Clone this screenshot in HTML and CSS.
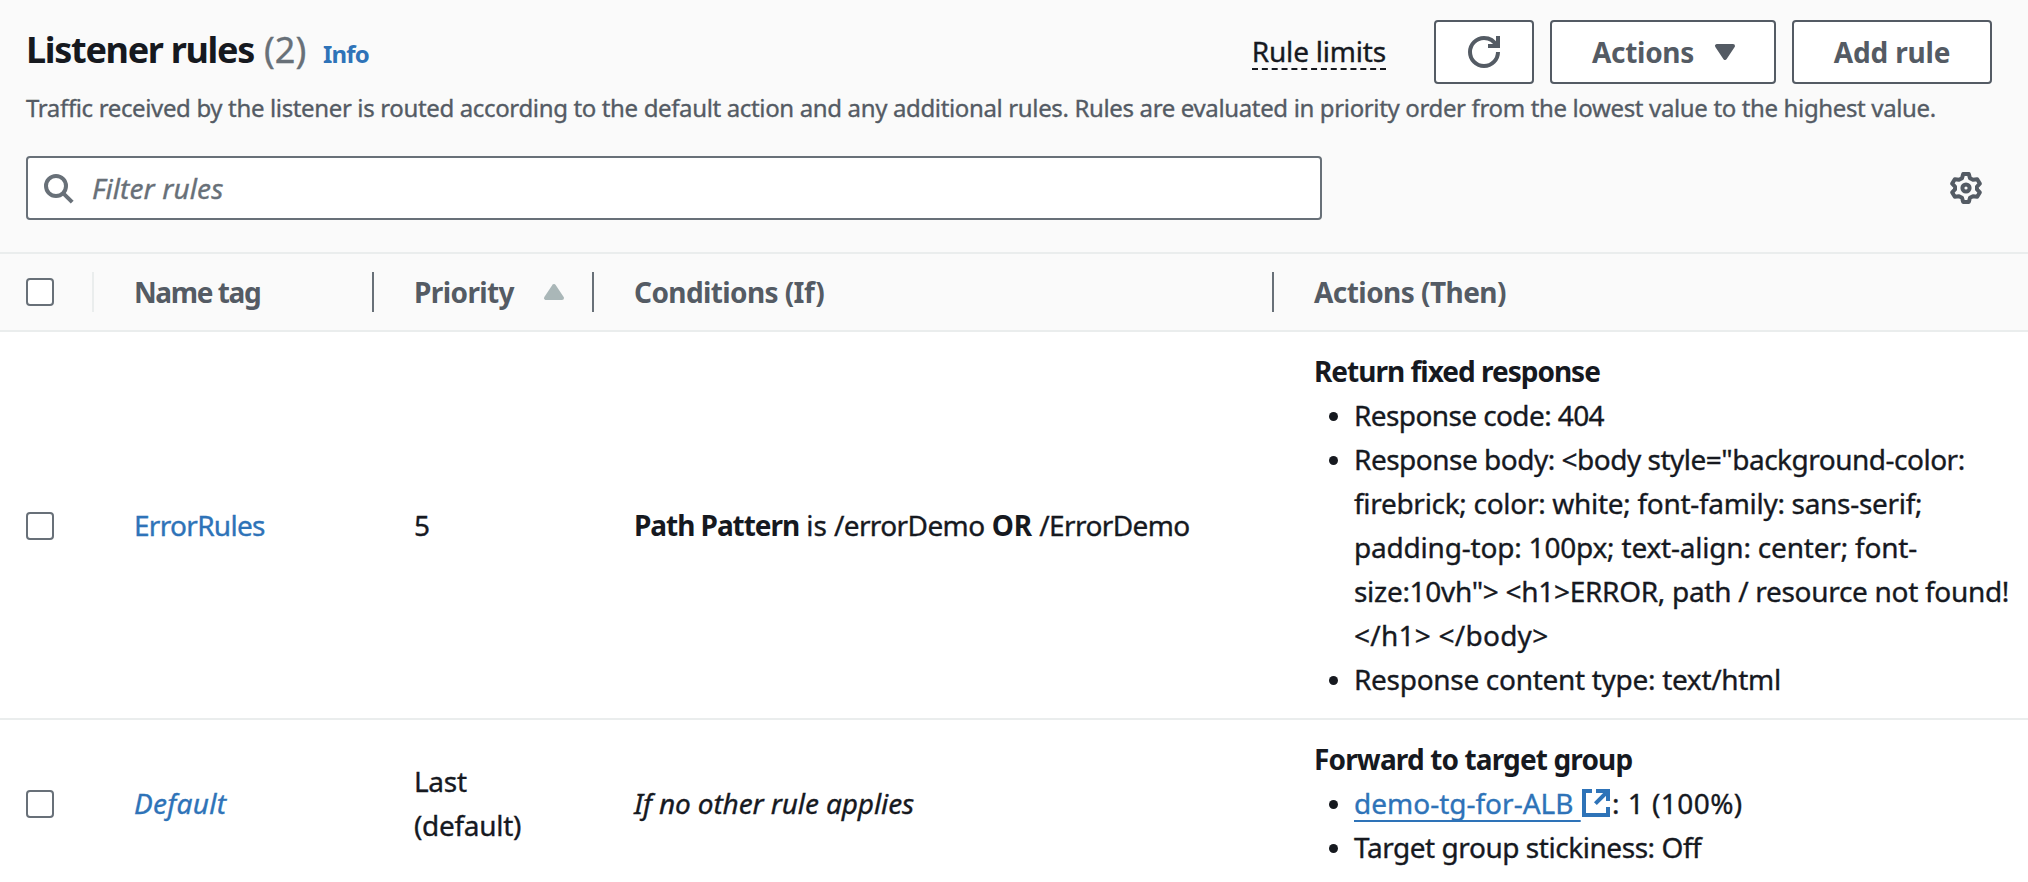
FILE: index.html
```html
<!DOCTYPE html>
<html lang="en">
<head>
<meta charset="utf-8">
<title>Listener rules</title>
<link rel="stylesheet" href="styles.css">
</head>
<body>
<header class="panel-header">
  <div class="title-row">
    <h2 class="title"><span class="title-text">Listener rules</span><span class="count">(2)</span><a class="info">Info</a></h2>
    <div class="toolbar">
      <span class="limits">Rule limits</span>
      <button class="btn btn-refresh" aria-label="Refresh">
        <svg class="icon" viewBox="0 0 16 16"><path d="M15 8c0 3.87-3.13 7-7 7s-7-3.13-7-7 3.13-7 7-7c2.79 0 5.2 1.63 6.33 4"/><path d="M10 5h5V0"/></svg>
      </button>
      <button class="btn btn-actions"><span class="actions-label">Actions</span>
        <svg class="icon caret" viewBox="0 0 16 16"><path d="M4 5h8l-4 6z"/></svg>
      </button>
      <button class="btn btn-add">Add rule</button>
    </div>
  </div>
  <p class="description">Traffic received by the listener is routed according to the default action and any additional rules. Rules are evaluated in priority order from the lowest value to the highest value.</p>
  <div class="filter-row">
    <div class="filter">
      <svg class="icon" viewBox="0 0 16 16"><circle cx="7" cy="7" r="5"/><path d="M10.4 10.4l4.7 4.7"/></svg>
      <span class="placeholder">Filter rules</span>
    </div>
    <svg class="icon gear" viewBox="0 0 16 16"><path d="M6.6 1h2.8L10 3.1l1.5.8 2.1-.3L14.900 5.800l-1.400 1.500v1.400l1.400 1.500-1.300 2.200-2.100-.3-1.500.8-.6 2.100H6.600L6 12.900l-1.500-.8-2.100.3L1.100 10.200l1.400-1.500V7.300L1.100 5.800l1.300-2.200 2.100.3L6 3.100z"/><circle cx="8" cy="8" r="1.800"/></svg>
  </div>
</header>

<main class="table">
  <div class="row head">
    <div class="cell select"><span class="checkbox"></span></div>
    <div class="cell"><span class="h-name">Name tag</span></div>
    <div class="cell"><span class="h-priority">Priority</span><svg class="icon sort" viewBox="0 0 16 16"><path d="M4 11h8L8 5z"/></svg></div>
    <div class="cell"><span class="h-cond">Conditions (If)</span></div>
    <div class="cell"><span class="h-act">Actions (Then)</span></div>
  </div>
  <div class="row">
    <div class="cell select"><span class="checkbox"></span></div>
    <div class="cell"><a class="link name-link">ErrorRules</a></div>
    <div class="cell">5</div>
    <div class="cell"><div class="condition"><b class="path">Path Pattern</b> is <span class="tight">/errorDemo</span> <b>OR</b> <span class="tight">/ErrorDemo</span></div></div>
    <div class="cell">
      <div class="rule">
        <b class="rule-title">Return fixed response</b>
        <ul>
          <li><div class="s55">Response code: 404</div></li>
          <li><div><span class="s50">Response body: &lt;body style="background-color:</span><br><span class="s30">firebrick; color: white; font-family: sans-serif;</span><br><span class="s20">padding-top: 100px; text-align: center; font-</span><br><span class="s30">size:10vh"&gt; &lt;h1&gt;ERROR, path / resource not found!</span><br><span class="s-wide">&lt;/h1&gt; &lt;/body&gt;</span></div></li>
          <li><div class="s30">Response content type: text/html</div></li>
        </ul>
      </div>
    </div>
  </div>
  <div class="row last">
    <div class="cell select"><span class="checkbox"></span></div>
    <div class="cell"><a class="link default-link"><i>Default</i></a></div>
    <div class="cell"><div class="s30">Last<br>(default)</div></div>
    <div class="cell"><i class="fallback">If no other rule applies</i></div>
    <div class="cell">
      <div class="rule">
        <b class="forward-title">Forward to target group</b>
        <ul>
          <li><div class="target"><a class="link underlined">demo-tg-for-ALB </a><svg class="icon external" viewBox="0 0 16 16"><path d="M6 2H2v12h12v-4M8 2h6v5M14 2L7.700 8.300"/></svg><span class="weight">: 1 (100%)</span></div></li>
          <li><div class="s45">Target group stickiness: Off</div></li>
        </ul>
      </div>
    </div>
  </div>
</main>
</body>
</html>
```
FILE: styles.css
```css
* { box-sizing: border-box; }
body {
  margin: 0;
  background: #fff;
  color: #16191f;
  font: 28px/44px "Noto Sans", "Open Sans", sans-serif;
  -webkit-text-stroke: .35px currentColor;
  white-space: nowrap;
  overflow: hidden;
}
b, .title-text, .info, .btn, .head { -webkit-text-stroke: 0; }
.icon {
  width: 32px;
  height: 32px;
  flex: none;
  display: block;
  fill: none;
  stroke: currentColor;
  stroke-width: 2;
}
.panel-header {
  height: 252px;
  padding: 20px 36px 0 26px;
  background: #fafafa;
}
.title-row { display: flex; justify-content: space-between; height: 64px; }
.title {
  display: flex;
  align-items: baseline;
  height: 44px;
  margin: 8px 0 0;
  font-size: 36px;
}
.title-text { width: 238px; letter-spacing: -1.3px; }
.count { width: 59px; color: #687078; font-weight: 400; }
.info { color: #2e73b8; font-size: 24px; letter-spacing: -.8px; }
.toolbar { display: flex; align-items: center; }
.limits {
  height: 38px;
  margin: 0 48px 2px 0;
  line-height: 38px;
  letter-spacing: -.2px;
  border-bottom: 2px dashed #16191f;
}
.btn {
  display: flex;
  align-items: center;
  justify-content: center;
  height: 64px;
  padding: 0;
  border: 2px solid #545b64;
  border-radius: 4px;
  background: #fff;
  color: #545b64;
  font: 700 28px/44px "Noto Sans", "Open Sans", sans-serif;
}
.btn-refresh { width: 100px; }
.btn-actions { width: 226px; margin: 0 16px; padding-left: 7px; gap: 15px; }
.btn-add { width: 200px; letter-spacing: -.15px; }
.actions-label { letter-spacing: -.3px; }
.caret, .sort { fill: currentColor; stroke-linejoin: round; }
.description {
  margin: 8px 0 0;
  color: #545b64;
  font-size: 24px;
  line-height: 32px;
  letter-spacing: -.355px;
}
.filter-row {
  display: flex;
  align-items: center;
  justify-content: space-between;
  margin-top: 32px;
  padding-right: 10px;
}
.filter {
  display: flex;
  align-items: center;
  gap: 18px;
  width: 1296px;
  height: 64px;
  padding-left: 14px;
  border: 2px solid #687078;
  border-radius: 4px;
  background: #fff;
  color: #687078;
}
.placeholder { font-style: italic; letter-spacing: .1px; }
.gear { color: #545b64; stroke-linejoin: round; }

.row {
  display: grid;
  grid-template-columns: 94px 280px 220px 680px 754px;
  border-bottom: 2px solid #eaeded;
}
.row.last { border-bottom: 0; }
.cell { display: flex; align-items: center; padding-left: 40px; }
.cell.select { padding-left: 26px; }
.checkbox {
  width: 28px;
  height: 28px;
  margin-top: 2px;
  border: 2px solid #687078;
  border-radius: 4px;
  background: #fff;
}
.head {
  height: 80px;
  padding: 18px 0 18px;
  border-top: 2px solid #eaeded;
  background: #fafafa;
  color: #545b64;
  font-weight: 700;
}
.head .checkbox { margin-top: 0; }
.head .cell { height: 40px; border-right: 2px solid #687078; }
.head .select { border-right-color: #eaeded; }
.head .cell:last-child { border-right: 0; }
.h-name { letter-spacing: -1.4px; }
.h-priority { width: 124px; letter-spacing: -.6px; }
.h-cond { letter-spacing: -.6px; }
.h-act { letter-spacing: -.55px; }
.sort { color: #aab7b8; }
.link { color: #2e73b8; }
.name-link { letter-spacing: -.7px; }
.default-link { letter-spacing: .3px; }
.condition { letter-spacing: -.1px; }
.path { letter-spacing: -1.05px; }
.tight { letter-spacing: -.6px; }
.fallback { letter-spacing: -.12px; }
.rule { padding: 17px 0; }
.rule-title { display: block; letter-spacing: -1px; }
.forward-title { display: block; letter-spacing: -.86px; }
ul { margin: 0; padding: 0; list-style: none; }
li { display: flex; }
li::before {
  content: "";
  flex: none;
  width: 9px;
  height: 9px;
  margin: 19px 16px 0 15px;
  border-radius: 50%;
  background: #16191f;
}
.s55 { letter-spacing: -.6px; }
.s50 { letter-spacing: -.5px; }
.s45 { letter-spacing: -.45px; }
.s30 { letter-spacing: -.3px; }
.s20 { letter-spacing: -.2px; }
.s-wide { letter-spacing: .25px; }
.target { display: flex; align-items: center; }
.underlined {
  width: 226px;
  white-space: pre;
  text-decoration: underline 2px;
  text-underline-offset: 6px;
  text-decoration-skip-ink: none;
}
.external { color: #2e73b8; }
.weight { letter-spacing: .45px; }
```
